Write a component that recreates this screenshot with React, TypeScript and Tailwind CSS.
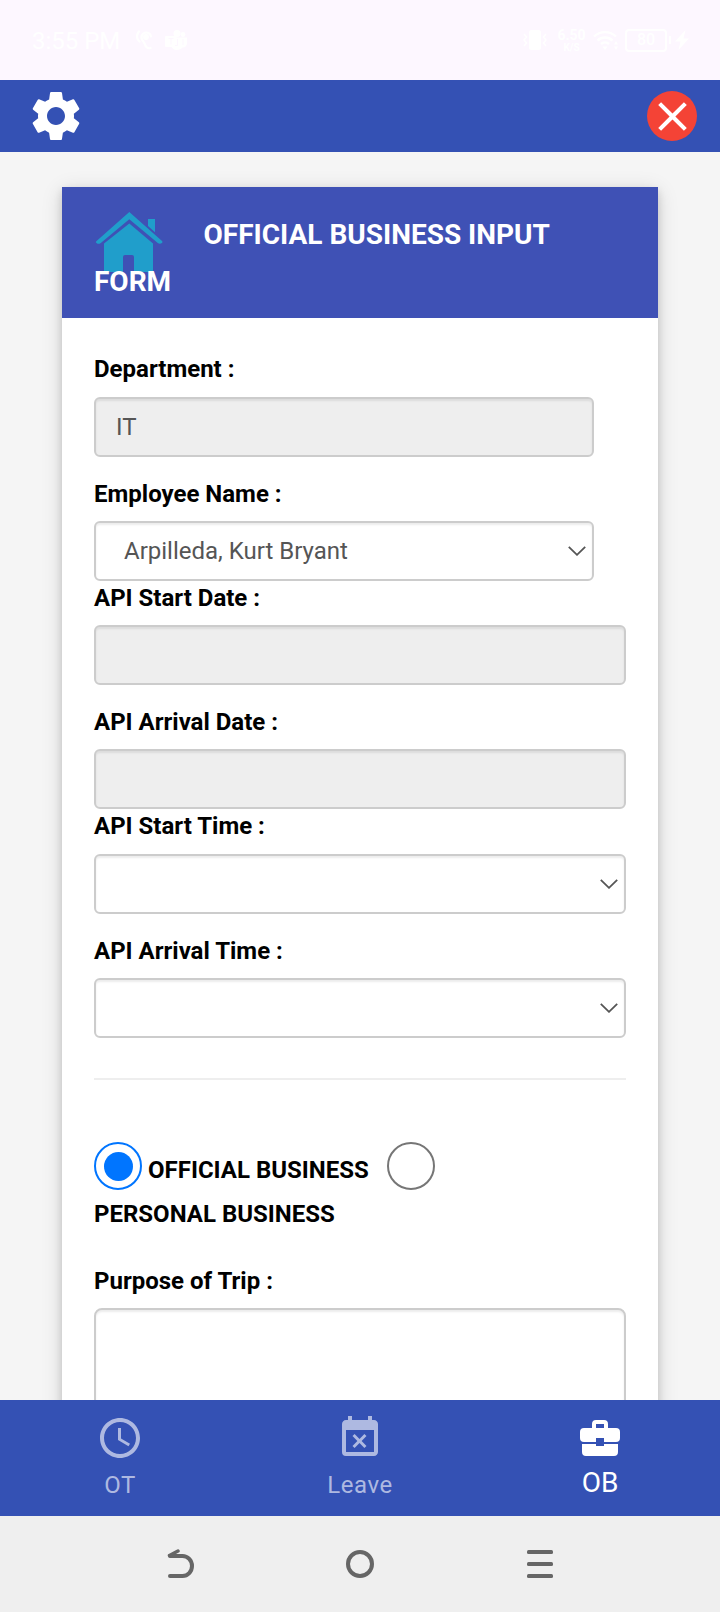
import React from "react";
import { MdAccessTime, MdClose, MdEventBusy, MdSettings } from "react-icons/md";

function StatusBar() {
  return (
    <header className="flex h-20 shrink-0 items-center justify-between bg-[#fdf7ff] pl-8 pr-[31px] text-white">
      <div className="flex items-center">
        <span className="w-[104px] pt-[2px] text-[24px] leading-8">3:55 PM</span>
        <svg className="h-5 w-4" viewBox="0 0 16 20" fill="none" stroke="currentColor" strokeWidth="2.2" strokeLinecap="round">
          <path d="M3 1.5C0 5 .5 9 3.500 11.500M15 6.500A4.800 4.800 0 1 0 6 9.500c1 2 2.500 3 3 5s2.500 4.500 5.500 3.500" />
          <circle cx="10" cy="7" r="1.800" fill="currentColor" />
        </svg>
        <svg className="ml-[13px] h-5 w-[22px]" viewBox="0 0 22 20" fill="currentColor">
          <circle cx="12" cy="3.500" r="3.500" />
          <circle cx="18" cy="4.500" r="2.400" />
          <path d="M1 6h10.500v1.500H22V13c0 3-2 4.500-4.500 4.500C16.500 19 14 20 11.500 20S7.500 18.500 6.500 17H1a1 1 0 0 1-1-1V7a1 1 0 0 1 1-1z" />
          <path d="M3.500 8.500h5M6 8.500v6M12.500 9v6.500H10M18 9v6" stroke="#fdf7ff" strokeWidth="1" fill="none" />
        </svg>
      </div>
      <div className="flex items-center">
        <svg className="h-5 w-6" viewBox="0 0 24 20" fill="none" stroke="currentColor" strokeWidth="1.500">
          <rect x="6" y="0" width="12" height="20" rx="2.500" fill="currentColor" stroke="none" />
          <path d="M1 4l2.500 3L1 10l2.500 3L1 16M23 4l-2.500 3 2.500 3-2.500 3 2.500 3" />
        </svg>
        <div className="ml-[11px] flex w-[27px] flex-col items-center font-bold">
          <span className="text-[14px] leading-[15px]">6.50</span>
          <span className="text-[10px] leading-[10px]">K/S</span>
        </div>
        <svg className="ml-2 h-5 w-[26px]" viewBox="0 0 26 20" fill="none" stroke="currentColor" strokeWidth="2.400">
          <path d="M1 6.500a16 16 0 0 1 22 0M4.500 10.500a11 11 0 0 1 15 0M8 14a6 6 0 0 1 8 0" />
          <path d="M12 20l-2.500-3.500h5zM23 11l2 3.500h-4zM23 20l-2-3.500h4z" fill="currentColor" stroke="none" />
        </svg>
        <div className="ml-[6px] flex h-[23px] w-[42px] items-center justify-center rounded border-2 border-white text-[16px] font-medium leading-5">80</div>
        <div className="ml-[2px] h-2 w-[2px] bg-white" />
        <svg className="ml-1 h-5 w-[14px]" viewBox="0 0 14 20" fill="currentColor">
          <path d="M10.500 0L0 11.500h5.500L3.500 20 14 8.500H8.500z" />
        </svg>
      </div>
    </header>
  );
}

function AppBar() {
  return (
    <div className="flex h-18 shrink-0 items-center justify-between bg-[#3451b4] pl-[26px] pr-[23px] text-white">
      <MdSettings size={60} />
      <div className="flex h-[50px] w-[50px] items-center justify-center rounded-full bg-[#f44336]">
        <MdClose size={49} />
      </div>
    </div>
  );
}

function HouseIcon() {
  return (
    <svg className="h-[61px] w-[70px] shrink-0" viewBox="94 211 70 61" fill="#209ecb">
      <path d="M129.300 212L162.300 241.200Q163 242.200 161.600 243.200Q159.700 244.200 157.800 242.900L129.300 219.300L100.800 242.900Q98.500 244.600 96.800 243.300Q95 242.300 96.300 241.200Z" />
      <path d="M148 219h7v13.200l-7-6.200z" />
      <path d="M129.300 223.500L153 243.500V272H134V257q0-2-2-2H125q-2 0-2 2v15H104V243.500z" />
    </svg>
  );
}

function Label({ children }: { children: React.ReactNode }) {
  return <div className="text-[24px] font-bold leading-[34px] text-black">{children}</div>;
}

const control =
  "flex h-[60px] items-center rounded-[6px] border-2 border-[#ccc] text-[24px] leading-[56px] text-[#555] shadow-[inset_0_2px_2px_rgba(0,0,0,0.075)]";

function ReadOnly({ value, width }: { value?: string; width: string }) {
  return <div className={`${control} ${width} bg-[#eee] pl-5`}>{value}</div>;
}

function Select({ value, width }: { value?: string; width: string }) {
  return (
    <div className={`${control} ${width} justify-between bg-white pl-7 pr-[6px]`}>
      <span>{value}</span>
      <svg className="h-[10px] w-[18px]" viewBox="0 0 18 10" fill="none" stroke="#555" strokeWidth="1.800">
        <path d="M.8 .8L9 8.800 17.200 .8" />
      </svg>
    </div>
  );
}

function FormCard() {
  return (
    <section className="flex h-[1400px] w-[596px] flex-col bg-white shadow-[0_4px_8px_0_rgba(0,0,0,0.14),0_4px_20px_0_rgba(0,0,0,0.14)]">
      <h1 className="h-[131px] shrink-0 bg-[#3f51b5] pl-8 pt-6 text-[28px] font-bold leading-[47px] text-white">
        <div className="flex h-[47px] items-start">
          <HouseIcon />
          <span className="ml-[39.5px]">OFFICIAL BUSINESS INPUT</span>
        </div>
        <div className="relative">FORM</div>
      </h1>
      <div className="flex flex-col px-8 pt-[34px]">
        <div className="flex flex-col gap-[11px]">
          <Label>Department :</Label>
          <ReadOnly value="IT" width="w-[500px]" />
        </div>
        <div className="mt-5 flex flex-col gap-[10px]">
          <Label>Employee Name :</Label>
          <Select value="Arpilleda, Kurt Bryant" width="w-[500px]" />
        </div>
        <div className="flex flex-col gap-[10px]">
          <Label>API Start Date :</Label>
          <ReadOnly width="w-full" />
        </div>
        <div className="mt-5 flex flex-col gap-[10px]">
          <Label>API Arrival Date :</Label>
          <ReadOnly width="w-full" />
        </div>
        <div className="flex flex-col gap-[11px]">
          <Label>API Start Time :</Label>
          <Select width="w-full" />
        </div>
        <div className="mt-5 flex flex-col gap-[10px]">
          <Label>API Arrival Time :</Label>
          <Select width="w-full" />
        </div>
        <hr className="mt-10 border-t-2 border-[#eee]" />
        <div className="mt-[62px] flex items-start">
          <div className="flex h-12 w-12 items-center justify-center rounded-full border-2 border-[#0075ff]">
            <div className="h-[29px] w-[29px] rounded-full bg-[#0075ff]" />
          </div>
          <div className="ml-[6px] w-[239px] pt-[11px]">
            <Label>OFFICIAL BUSINESS</Label>
          </div>
          <div className="h-12 w-12 rounded-full border-2 border-[#767676]" />
        </div>
        <div className="mt-[7px]">
          <Label>PERSONAL BUSINESS</Label>
        </div>
        <div className="mt-[33px] flex flex-col gap-[10px]">
          <Label>Purpose of Trip :</Label>
          <div className="h-[180px] rounded-[8px] border-2 border-[#ccc] shadow-[inset_0_2px_2px_rgba(0,0,0,0.075)]" />
        </div>
      </div>
    </section>
  );
}

function TabBar() {
  return (
    <nav className="grid h-[116px] shrink-0 grid-cols-3 bg-[#3451b4] pt-[14px] text-[#aeb9e1]">
      <div className="flex flex-col items-center">
        <MdAccessTime size={48} />
        <span className="mt-[7px] text-[24px] leading-8 tracking-[0.4px]">OT</span>
      </div>
      <div className="flex flex-col items-center">
        <MdEventBusy size={48} />
        <span className="mt-[7px] text-[24px] leading-8 tracking-[0.6px]">Leave</span>
      </div>
      <div className="flex flex-col items-center text-white">
        <svg className="h-12 w-12" viewBox="0 0 24 24" fill="currentColor">
          <path d="M10 16v-1H3v4a2 2 0 0 0 2 2h14a2 2 0 0 0 2-2v-4h-7v1zM20 7h-4V5a2 2 0 0 0-2-2h-4a2 2 0 0 0-2 2v2H4a2 2 0 0 0-2 2v3a2 2 0 0 0 2 2h6v-2h4v2h6a2 2 0 0 0 2-2V9a2 2 0 0 0-2-2zm-6 0h-4V5h4z" />
        </svg>
        <span className="mt-[5px] text-[28px] leading-8">OB</span>
      </div>
    </nav>
  );
}

function SystemBar() {
  return (
    <div className="flex h-24 shrink-0 items-center justify-center gap-[150px] bg-[#efefef]">
      <svg className="h-[30px] w-[30px]" viewBox="165 1549 30 30" fill="none" stroke="#666" strokeWidth="4" strokeLinecap="round" strokeLinejoin="round">
        <path d="M170 1576H182.500A9.500 10 0 0 0 182.500 1556H170" />
        <path d="M169.500 1555.500L178 1551" strokeWidth="3.500" />
      </svg>
      <svg className="h-[30px] w-[30px]" viewBox="0 0 30 30" fill="none" stroke="#666" strokeWidth="4">
        <circle cx="15" cy="15" r="12" />
      </svg>
      <svg className="h-[30px] w-[30px]" viewBox="0 0 30 30" fill="#666">
        <rect x="2" y="1" width="26" height="4" rx="1.500" />
        <rect x="2" y="13" width="26" height="4" rx="1.500" />
        <rect x="2" y="25" width="26" height="4" rx="1.500" />
      </svg>
    </div>
  );
}

export default function App() {
  return (
    <div className="flex h-[1612px] w-[720px] flex-col overflow-hidden font-['Roboto',sans-serif]">
      <StatusBar />
      <AppBar />
      <main className="flex min-h-0 flex-1 items-start justify-center overflow-hidden bg-[#f5f5f5] pt-[35px]">
        <FormCard />
      </main>
      <TabBar />
      <SystemBar />
    </div>
  );
}
